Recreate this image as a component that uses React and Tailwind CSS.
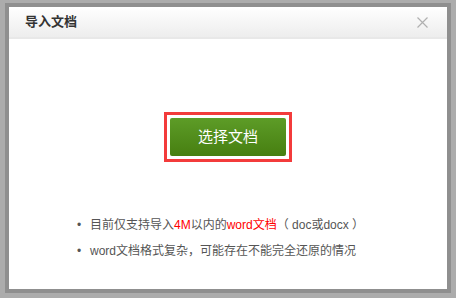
import React from 'react';

const font = { fontFamily: '"Liberation Sans", "Noto Sans CJK SC", sans-serif' };

const App = () => {
    return (
        <div className="w-[456px] h-[298px] bg-[#acacac] pt-[3px] px-[5px] pb-[5px]" style={font}>
            <div className="h-full border-4 border-[#8f8f8f] bg-white flex flex-col">
                {/* Header */}
                <div className="h-[32px] flex items-center justify-between pl-[16px] pr-[19px] bg-gradient-to-b from-white to-[#ededed] border-b-2 border-[#e8e8e8]">
                    <span className="text-[13px] font-bold text-[#333]">导入文档</span>
                    <svg width="11" height="11" viewBox="0 0 11 11" className="mt-[1px]">
                        <path d="M0.5 0.5 L10.5 10.5 M10.5 0.5 L0.5 10.5" stroke="#b0b0b0" strokeWidth="1.2" />
                    </svg>
                </div>

                {/* Body */}
                <div className="flex-1 flex flex-col items-center pt-[73px]">
                    <div className="border-[3px] border-[#f33b3b] p-[3px]">
                        <button className="w-[116px] h-[38px] rounded-[2px] bg-gradient-to-b from-[#5d9c27] to-[#477f10] text-white text-[15px]">
                            选择文档
                        </button>
                    </div>
                </div>

                <ul className="pl-[68px] pb-[29px] text-[12px] text-[#555] space-y-[8px]">
                    <li className="flex items-center">
                        <span className="w-[13px] text-[#555]">•</span>
                        <span>目前仅支持导入<span className="text-[#f00]">4M</span>以内的<span className="text-[#f00]">word文档</span>（ doc或docx ）</span>
                    </li>
                    <li className="flex items-center">
                        <span className="w-[13px] text-[#555]">•</span>
                        <span>word文档格式复杂，可能存在不能完全还原的情况</span>
                    </li>
                </ul>
            </div>
        </div>
    );
};

export default App;
